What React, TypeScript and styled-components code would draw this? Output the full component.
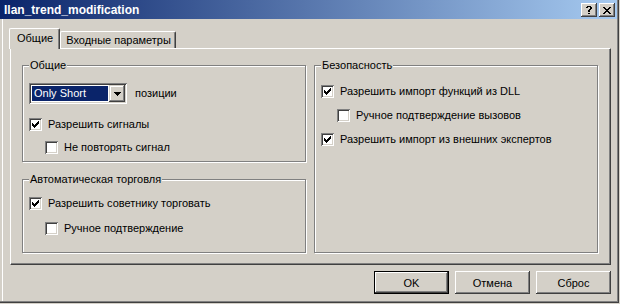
import styled, { createGlobalStyle } from 'styled-components'

const FACE = '#D4D0C8'
const SHADOW = '#808080'
const DARK = '#404040'
const NAVY = '#0A246A'

const GlobalStyle = createGlobalStyle`
  html, body {
    margin: 0;
    padding: 0;
    width: 620px;
    height: 304px;
    overflow: hidden;
    background: ${FACE};
  }
  body {
    font-family: "Liberation Sans", Arial, sans-serif;
    font-size: 11px;
    color: #000;
  }
`;

const Window = styled.div`
  width: 619px;
  height: 303px;
  box-sizing: border-box;
  border-right: 1px solid ${DARK};
  border-bottom: 1px solid ${DARK};
`;

const Frame = styled.div`
  height: 100%;
  box-sizing: border-box;
  border-right: 1px solid ${SHADOW};
  border-bottom: 1px solid ${SHADOW};
  display: flex;
  flex-direction: column;
`;

const TitleBar = styled.div`
  height: 19px;
  flex: none;
  display: flex;
  align-items: center;
  padding: 0 2px 0 4px;
  background: linear-gradient(to right, ${NAVY}, #A6CAF0);
`;

const Title = styled.span`
  flex: 1;
  color: #fff;
  font-weight: bold;
  font-size: 12px;
`;

const TitleButtons = styled.div`
  display: flex;
  gap: 2px;
  margin-top: 1px;
`;

const TitleButton = styled.div`
  width: 16px;
  height: 14px;
  box-sizing: border-box;
  background: ${FACE};
  display: flex;
  align-items: center;
  justify-content: center;
  box-shadow: inset -1px -1px ${DARK}, inset 1px 1px #fff, inset -2px -2px ${SHADOW};
  svg { display: block; }
`;

const Body = styled.div`
  flex: 1;
  display: flex;
  flex-direction: column;
  padding: 9px 6px 0 10px;
  box-shadow: inset 2px 0 ${FACE}, inset 3px 0 #fff;
`;

const TabsRow = styled.div`
  height: 20px;
  display: flex;
  align-items: flex-end;
  position: relative;
  z-index: 1;
`;

const Tab = styled.div<{ $active?: boolean }>`
  box-sizing: border-box;
  height: ${p => (p.$active ? '21px' : '17px')};
  margin: ${p => (p.$active ? '0 0 -1px -1px' : '0')};
  padding: ${p => (p.$active ? '3px 6px 0 7px' : '2px 4px 0 5px')};
  background: ${FACE};
  border-top: 1px solid #fff;
  border-left: 1px solid #fff;
  border-right: 1px solid ${DARK};
  border-radius: 2px 2px 0 0;
  box-shadow: inset -1px 0 ${SHADOW};
  white-space: nowrap;
`;

const Panel = styled.div`
  height: 217px;
  box-sizing: border-box;
  border-top: 1px solid #fff;
  border-left: 1px solid #fff;
  border-right: 1px solid ${DARK};
  border-bottom: 1px solid ${DARK};
  box-shadow: inset -1px -1px ${SHADOW};
  padding: 10px 0 11px 11px;
  display: grid;
  grid-template-columns: 284px 284px;
  column-gap: 8px;
`;

const Column = styled.div`
  display: flex;
  flex-direction: column;
  gap: 11px;
`;

const Group = styled.fieldset<{ $grow?: boolean }>`
  margin: 0;
  min-width: 0;
  box-sizing: border-box;
  border: 1px solid ${SHADOW};
  box-shadow: 1px 1px 0 #fff, inset 1px 1px 0 #fff;
  padding: 0 6px 7px 6px;
  flex: ${p => (p.$grow ? 1 : 'none')};
`;

const Legend = styled.legend`
  padding: 0 1px;
  line-height: 13px;
  background: ${FACE};
`;

const Row = styled.div<{ $mt: number; $indent?: boolean }>`
  display: flex;
  align-items: center;
  gap: 6px;
  margin-top: ${p => p.$mt}px;
  margin-left: ${p => (p.$indent ? 16 : 0)}px;
  line-height: 13px;
  white-space: nowrap;
`;

const Combo = styled.div`
  width: 98px;
  height: 21px;
  box-sizing: border-box;
  padding: 2px;
  background: #fff;
  display: flex;
  box-shadow: inset 1px 1px ${SHADOW}, inset -1px -1px #fff, inset 2px 2px ${DARK}, inset -2px -2px ${FACE};
`;

const ComboValue = styled.div`
  flex: 1;
  margin: 1px;
  padding-left: 2px;
  background: ${NAVY};
  color: #fff;
  line-height: 15px;
`;

const ComboArrow = styled.div`
  width: 16px;
  background: ${FACE};
  display: flex;
  align-items: center;
  justify-content: center;
  box-shadow: inset -1px -1px ${DARK}, inset 1px 1px ${FACE}, inset -2px -2px ${SHADOW}, inset 2px 2px #fff;
  svg { display: block; }
`;

const Box = styled.span`
  width: 13px;
  height: 13px;
  flex: none;
  box-sizing: border-box;
  background: #fff;
  display: flex;
  align-items: center;
  justify-content: center;
  box-shadow: inset 1px 1px ${SHADOW}, inset -1px -1px #fff, inset 2px 2px ${DARK}, inset -2px -2px ${FACE};
  svg { display: block; }
`;

const Footer = styled.div`
  display: flex;
  justify-content: flex-end;
  gap: 6px;
  margin-top: 6px;
`;

const Button = styled.button<{ $default?: boolean }>`
  width: 75px;
  height: 23px;
  box-sizing: border-box;
  margin: 0;
  padding: 0;
  font: inherit;
  color: #000;
  background: ${FACE};
  border: ${p => (p.$default ? '1px solid #000' : 'none')};
  box-shadow: inset -1px -1px ${DARK}, inset 1px 1px #fff, inset -2px -2px ${SHADOW};
`;

const Pixels = ({ d, w, h }: { d: string; w: number; h: number }) => (
  <svg width={w} height={h} viewBox={`0 0 ${w} ${h}`} shapeRendering="crispEdges">
    <path d={d} fill="#000" />
  </svg>
);

const CHECK = 'M6 0h1v1h-1z M5 1h2v1h-2z M0 2h1v1h-1z M4 2h3v1h-3z M0 3h2v1h-2z M3 3h3v1h-3z M0 4h5v1h-5z M1 5h3v1h-3z M2 6h1v1h-1z';
const CLOSE = 'M0 0h2v1h-2z M6 0h2v1h-2z M1 1h2v1h-2z M5 1h2v1h-2z M2 2h4v1h-4z M3 3h2v1h-2z M2 4h4v1h-4z M1 5h2v1h-2z M5 5h2v1h-2z M0 6h2v1h-2z M6 6h2v1h-2z';
const HELP = 'M1 0h4v1h-4z M0 1h2v1h-2z M4 1h2v1h-2z M4 2h2v1h-2z M3 3h2v1h-2z M2 4h2v1h-2z M2 5h2v1h-2z M2 7h2v1h-2z';
const ARROW = 'M0 0h7v1h-7z M1 1h5v1h-5z M2 2h3v1h-3z M3 3h1v1h-1z';

const Check = ({ on, label, mt, indent }: { on?: boolean; label: string; mt: number; indent?: boolean }) => (
  <Row $mt={mt} $indent={indent}>
    <Box>{on && <Pixels d={CHECK} w={7} h={7} />}</Box>
    <span>{label}</span>
  </Row>
);

const App = () => (
  <>
    <GlobalStyle />
    <Window>
      <Frame>
        <TitleBar>
          <Title>Ilan_trend_modification</Title>
          <TitleButtons>
            <TitleButton><Pixels d={HELP} w={6} h={8} /></TitleButton>
            <TitleButton><Pixels d={CLOSE} w={8} h={7} /></TitleButton>
          </TitleButtons>
        </TitleBar>
        <Body>
          <TabsRow>
            <Tab $active>Общие</Tab>
            <Tab>Входные параметры</Tab>
          </TabsRow>
          <Panel>
            <Column>
              <Group>
                <Legend>Общие</Legend>
                <Row $mt={11}>
                  <Combo>
                    <ComboValue>Only Short</ComboValue>
                    <ComboArrow><Pixels d={ARROW} w={7} h={4} /></ComboArrow>
                  </Combo>
                  <span style={{ marginLeft: 2 }}>позиции</span>
                </Row>
                <Check on label="Разрешить сигналы" mt={14} />
                <Check label="Не повторять сигнал" mt={10} indent />
              </Group>
              <Group $grow>
                <Legend>Автоматическая торговля</Legend>
                <Check on label="Разрешить советнику торговать" mt={11} />
                <Check label="Ручное подтверждение" mt={12} indent />
              </Group>
            </Column>
            <Group>
              <Legend>Безопасность</Legend>
              <Check on label="Разрешить импорт функций из DLL" mt={13} />
              <Check label="Ручное подтверждение вызовов" mt={11} indent />
              <Check on label="Разрешить импорт из внешних экспертов" mt={11} />
            </Group>
          </Panel>
          <Footer>
            <Button $default>OK</Button>
            <Button>Отмена</Button>
            <Button>Сброс</Button>
          </Footer>
        </Body>
      </Frame>
    </Window>
  </>
);

export default App;
